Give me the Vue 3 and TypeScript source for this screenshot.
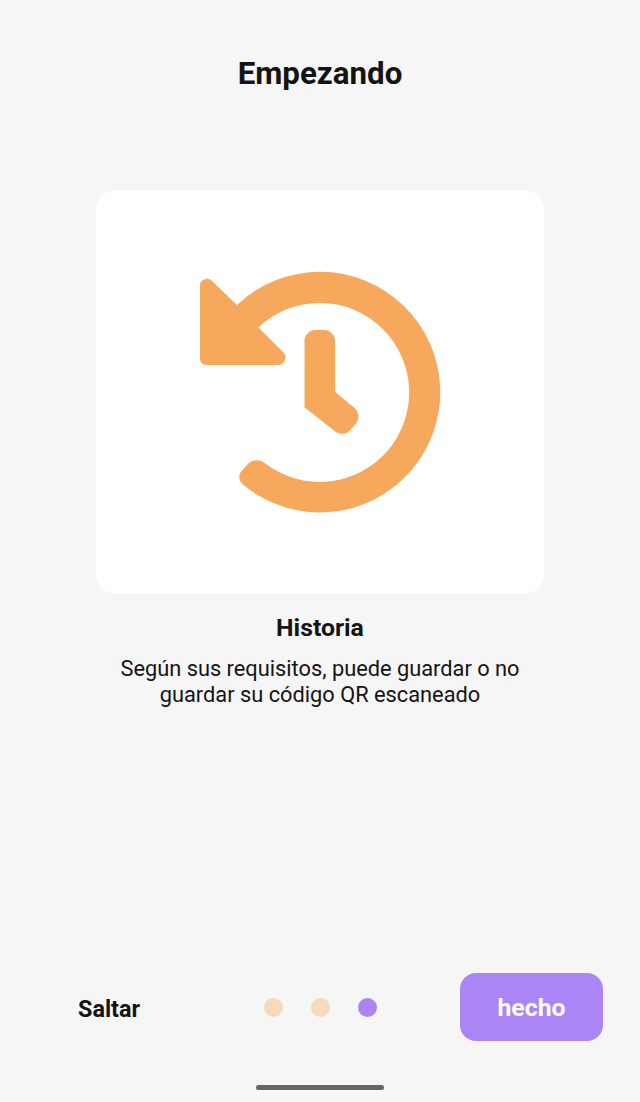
<script setup lang="ts">
const dots: boolean[] = [false, false, true]
</script>

<template>
  <div class="screen">
    <h1 class="title">Empezando</h1>
    <div class="card">
      <svg class="icon" viewBox="180 260 280 270" width="280" height="270" aria-hidden="true">
        <path
          fill="#f6a95c"
          d="M237 305 A120.3 120.3 0 1 1 243.5 485 A9.5 9.5 0 0 1 242.5 470 L248.3 463.5 A12.5 12.5 0 0 1 265 463.3 A89.5 89.5 0 1 0 258.3 327.3 L283.5 352.5 A7.5 7.5 0 0 1 278 365 L206 365 A6 6 0 0 1 200 359 L200 286 A7 7 0 0 1 212 281 Z"
        />
        <path
          fill="#f6a95c"
          d="M304.5 341 A11 11 0 0 1 315.5 330 L324 330 A11 11 0 0 1 335 341 L335 391.7 L354.5 408 A11 11 0 0 1 356.5 423 L350 430.5 A11 11 0 0 1 336 432 L304.5 407.3 Z"
        />
      </svg>
    </div>
    <h2 class="heading">Historia</h2>
    <p class="body">Según sus requisitos, puede guardar o no guardar su código QR escaneado</p>
    <div class="footer">
      <span class="skip">Saltar</span>
      <div class="dots">
        <span v-for="(active, i) in dots" :key="i" class="dot" :class="{ active }"></span>
      </div>
      <button class="done" type="button">hecho</button>
    </div>
    <div class="home-bar"></div>
  </div>
</template>

<style scoped>
.screen {
  position: relative;
  box-sizing: border-box;
  width: 640px;
  height: 1102px;
  background: #f6f6f6;
  color: #141414;
  font-family: Roboto, "Liberation Sans", sans-serif;
  display: flex;
  flex-direction: column;
  align-items: center;
  overflow: hidden;
}
.title {
  margin: 55px 0 0;
  font-size: 31.3px;
  line-height: 38px;
  font-weight: 700;
}
.card {
  margin-top: 97px;
  width: 448px;
  height: 404px;
  background: #fff;
  border-radius: 20px;
  padding: 70px 0 0 84px;
  box-sizing: border-box;
}
.icon {
  display: block;
}
.heading {
  margin: 19px 0 0;
  font-size: 24.8px;
  line-height: 30px;
  font-weight: 700;
}
.body {
  margin: 13px 0 0;
  width: 440px;
  text-align: center;
  font-size: 21.8px;
  line-height: 26px;
  font-weight: 400;
}
.footer {
  margin-top: auto;
  margin-bottom: 61px;
  width: 100%;
  box-sizing: border-box;
  padding: 0 37px;
  display: grid;
  grid-template-columns: 1fr auto 1fr;
  align-items: center;
}
.skip {
  font-size: 23.4px;
  font-weight: 700;
  padding: 3px 0 0 41px;
}
.dots {
  display: flex;
  gap: 28px;
}
.dot {
  width: 19px;
  height: 19px;
  border-radius: 50%;
  background: #f7d9bb;
}
.dot.active {
  background: #ab85f5;
}
.done {
  justify-self: end;
  width: 143px;
  height: 68px;
  border: 0;
  border-radius: 16px;
  background: #ab85f5;
  color: #fff;
  font: 700 24.8px Roboto, "Liberation Sans", sans-serif;
}
.home-bar {
  position: absolute;
  left: 256px;
  top: 1085px;
  width: 128px;
  height: 5px;
  border-radius: 3px;
  background: #666;
}
</style>
